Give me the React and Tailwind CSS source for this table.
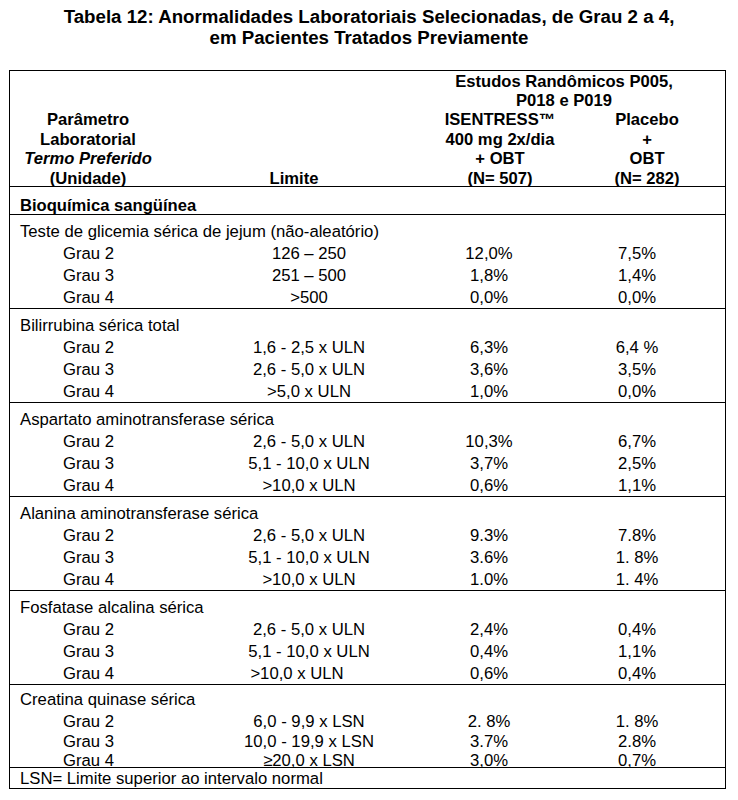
const sections = [
  {
    title: "Teste de glicemia sérica de jejum (não-aleatório)",
    rows: [
      ["Grau 2", "126 – 250", "12,0%", "7,5%"],
      ["Grau 3", "251 – 500", "1,8%", "1,4%"],
      ["Grau 4", ">500", "0,0%", "0,0%"],
    ],
  },
  {
    title: "Bilirrubina sérica total",
    rows: [
      ["Grau 2", "1,6 - 2,5 x ULN", "6,3%", "6,4 %"],
      ["Grau 3", "2,6 - 5,0 x ULN", "3,6%", "3,5%"],
      ["Grau 4", ">5,0 x ULN", "1,0%", "0,0%"],
    ],
  },
  {
    title: "Aspartato aminotransferase sérica",
    rows: [
      ["Grau 2", "2,6 - 5,0 x ULN", "10,3%", "6,7%"],
      ["Grau 3", "5,1 - 10,0 x ULN", "3,7%", "2,5%"],
      ["Grau 4", ">10,0 x ULN", "0,6%", "1,1%"],
    ],
  },
  {
    title: "Alanina aminotransferase sérica",
    rows: [
      ["Grau 2", "2,6 - 5,0 x ULN", "9.3%", "7.8%"],
      ["Grau 3", "5,1 - 10,0 x ULN", "3.6%", "1. 8%"],
      ["Grau 4", ">10,0 x ULN", "1.0%", "1. 4%"],
    ],
  },
  {
    title: "Fosfatase alcalina sérica",
    rows: [
      ["Grau 2", "2,6 - 5,0 x ULN", "2,4%", "0,4%"],
      ["Grau 3", "5,1 - 10,0 x ULN", "0,4%", "1,1%"],
      ["Grau 4", ">10,0 x ULN", "0,6%", "0,4%", true],
    ],
  },
];

function Row({ r, h }) {
  return (
    <div className={`grid grid-cols-[190px_218px_142px_154px] items-center ${h}`}>
      <div className="pl-[53px]">{r[0]}</div>
      <div className={`text-center ${r[4] ? "pr-[24px]" : ""}`}>{r[1]}</div>
      <div className="text-center">{r[2]}</div>
      <div className="text-center">{r[3]}</div>
    </div>
  );
}

export default function App() {
  return (
    <div
      className="w-[738px] h-[800px] bg-white text-black"
      style={{ fontFamily: '"Liberation Sans", Arial, sans-serif' }}
    >
      <div className="pt-[6px] text-center font-bold text-[18.7px] leading-[21px]">
        <div>Tabela 12: Anormalidades Laboratoriais Selecionadas, de Grau 2 a 4,</div>
        <div>em Pacientes Tratados Previamente</div>
      </div>
      <div className="ml-[9px] mt-[22px] w-[717px] border border-black">
        {/* header */}
        <div className="flex items-end font-bold text-[16.6px] leading-[19.4px] h-[116px] border-b border-black">
          <div className="w-[156px] text-center mb-[-2px]">
            <div>Parâmetro</div>
            <div>Laboratorial</div>
            <div className="italic">Termo Preferido</div>
            <div>(Unidade)</div>
          </div>
          <div className="w-[264px] text-center pr-[8px] mb-[-2px]">Limite</div>
          <div className="w-[294px] mb-[-2px]">
            <div className="text-center pr-[26px]">
              <div>Estudos Randômicos P005,</div>
              <div>P018 e P019</div>
            </div>
            <div className="flex">
              <div className="w-[140px] text-center">
                <div>ISENTRESS™</div>
                <div>400 mg 2x/dia</div>
                <div>+ OBT</div>
                <div>(N= 507)</div>
              </div>
              <div className="w-[154px] text-center">
                <div>Placebo</div>
                <div>+</div>
                <div>OBT</div>
                <div>(N= 282)</div>
              </div>
            </div>
          </div>
        </div>
        <div className="h-[28px] pt-[10px] pl-[10px] font-bold text-[16.6px] leading-[17px] border-b border-black">
          Bioquímica sangüínea
        </div>
        <div className="text-[16.7px]">
          {sections.map((s, i) => (
            <div key={i} className="h-[94px] pt-[8px] border-b border-black">
              <div className="h-[18px] flex items-center pl-[10px]">{s.title}</div>
              {s.rows.map((r, j) => (
                <Row key={j} r={r} h="h-[22px]" />
              ))}
            </div>
          ))}
          <div className="h-[83px] pt-[5px] border-b border-black">
            <div className="h-[19px] flex items-center pl-[10px]">Creatina quinase sérica</div>
            <Row r={["Grau 2", "6,0 - 9,9 x LSN", "2. 8%", "1. 8%"]} h="h-[19.5px]" />
            <Row r={["Grau 3", "10,0 - 19,9 x LSN", "3.7%", "2.8%"]} h="h-[19.5px]" />
            <Row r={["Grau 4", "≥20,0 x LSN", "3,0%", "0,7%"]} h="h-[19.5px]" />
          </div>
          <div className="h-[20px] flex items-center pl-[10px] pt-[1px]">
            LSN= Limite superior ao intervalo normal
          </div>
        </div>
      </div>
    </div>
  );
}
